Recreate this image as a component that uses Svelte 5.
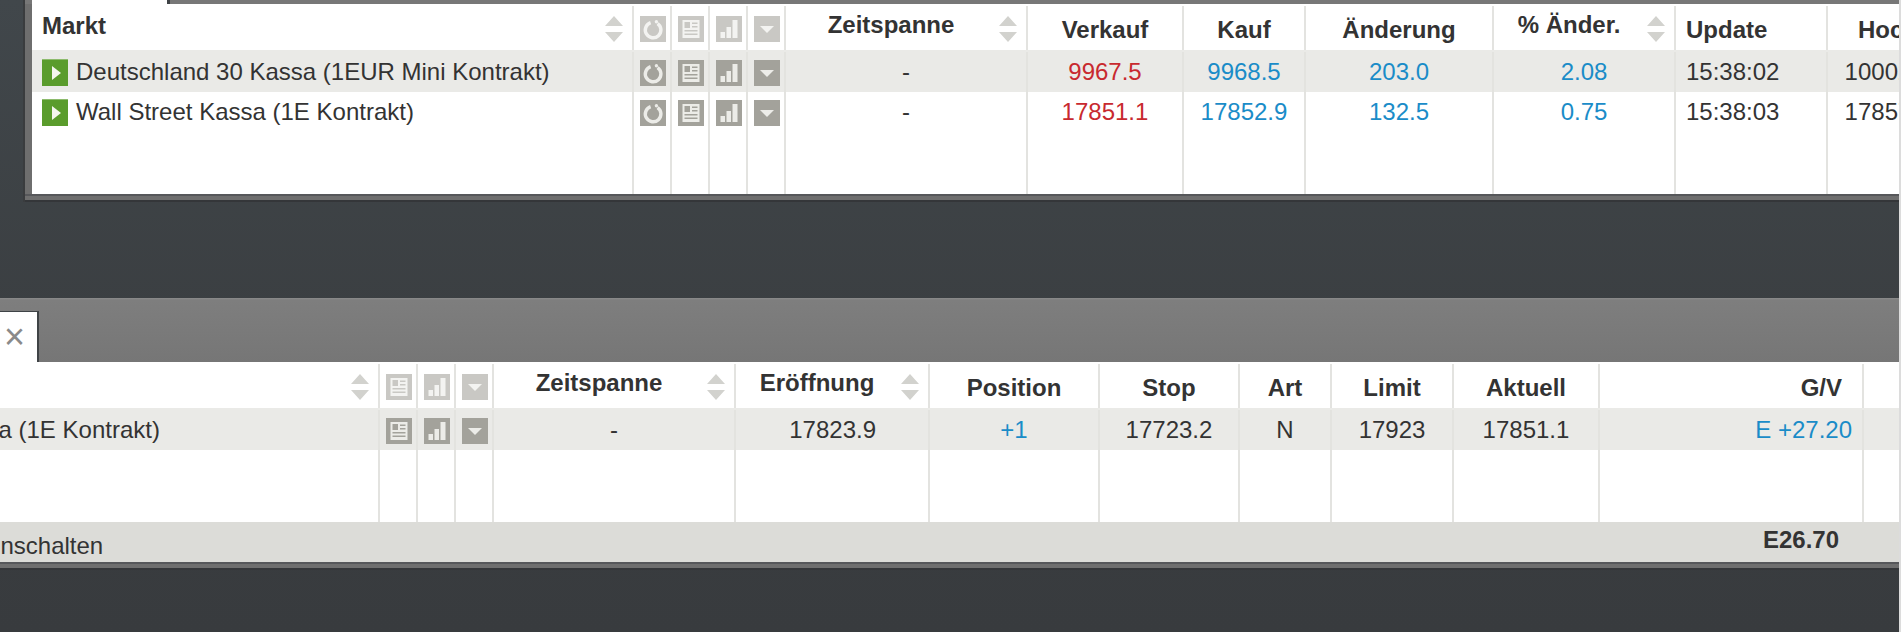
<script lang="ts">
  type Col = { label: string; width: number; align?: string; sort?: boolean };

  const marketCols: Col[] = [
    { label: "Zeitspanne", width: 242, sort: true },
    { label: "Verkauf", width: 156 },
    { label: "Kauf", width: 122 },
    { label: "Änderung", width: 188 },
    { label: "% Änder.", width: 182, sort: true },
    { label: "Update", width: 152, align: "left" },
    { label: "Hoch", width: 122 }
  ];

  const markets = [
    { name: "Deutschland 30 Kassa (1EUR Mini Kontrakt)", cells: ["-", "9967.5", "9968.5", "203.0", "2.08", "15:38:02", "10002.5"], kinds: ["", "sell", "up", "up", "up", "", ""] },
    { name: "Wall Street Kassa (1E Kontrakt)", cells: ["-", "17851.1", "17852.9", "132.5", "0.75", "15:38:03", "17857.3"], kinds: ["", "sell", "up", "up", "up", "", ""] }
  ];

  const posCols: Col[] = [
    { label: "Zeitspanne", width: 242, sort: true },
    { label: "Eröffnung", width: 194, sort: true },
    { label: "Position", width: 170 },
    { label: "Stop", width: 140 },
    { label: "Art", width: 92 },
    { label: "Limit", width: 122 },
    { label: "Aktuell", width: 146 }
  ];
</script>

{#snippet sortArrows()}
  <svg class="sort" width="20" height="26" viewBox="0 0 20 26">
    <path d="M10 0 L19 10 H1 Z M1 16 H19 L10 26 Z" fill="#d2d2ce" />
  </svg>
{/snippet}

{#snippet tools(refresh: boolean)}
  {#if refresh}
    <div class="tool">
      <svg class="ico" viewBox="0 0 26 26">
        <rect width="26" height="26" />
        <path class="line" d="M17.6 7.6 A7.8 7.8 0 1 1 10.6 6.6" stroke-width="3.4" />
        <circle class="mark" cx="16.4" cy="5.8" r="1.7" />
      </svg>
    </div>
  {/if}
  <div class="tool">
    <svg class="ico" viewBox="0 0 26 26">
      <rect width="26" height="26" />
      <path class="mark" fill-rule="evenodd" d="M4.5 4 H21.5 V22 H4.5 Z M6.5 6 V12 H12 V6 Z M14 6.5 V8 H19.5 V6.5 Z M14 10 V11.5 H19.5 V10 Z M6.5 14 V15.5 H19.5 V14 Z M6.5 17.5 V19 H19.5 V17.5 Z" />
    </svg>
  </div>
  <div class="tool">
    <svg class="ico" viewBox="0 0 26 26">
      <rect width="26" height="26" />
      <path class="mark" d="M4.5 16 H9 V22 H4.5 Z M10.5 11 H15 V22 H10.5 Z M16.5 4 H21.5 V22 H16.5 Z" />
    </svg>
  </div>
  <div class="tool">
    <svg class="ico" viewBox="0 0 26 26">
      <rect width="26" height="26" />
      <path class="mark" d="M6 10 H20 L13 17 Z" />
    </svg>
  </div>
{/snippet}

{#snippet headCells(cols: Col[])}
  {#each cols as c}
    <div class="hd" class:left={c.align === "left"} class:sorted={c.sort} style="width:{c.width}px">
      <span>{c.label}</span>
      {#if c.sort}{@render sortArrows()}{/if}
    </div>
  {/each}
{/snippet}

<div class="page">
  <div class="stage">
    <section class="panel top">
      <div class="strip"><div class="tab"></div></div>
      <div class="grid">
        <div class="row head">
          <div class="name hd-name">
            <strong class="market-title">Markt</strong>
            {@render sortArrows()}
          </div>
          <div class="tools faded">{@render tools(true)}</div>
          {@render headCells(marketCols)}
        </div>

        {#each markets as m, i}
          <div class="row body" class:hl={i === 0}>
            <div class="name">
              <svg class="play" viewBox="0 0 26 27">
                <rect width="26" height="27" fill="#5a9c2c" />
                <rect width="26" height="1" fill="#8dbb6c" />
                <path d="M10 7 L19 14 L10 21 Z" fill="#f4f6ee" />
              </svg>
              <span>{m.name}</span>
            </div>
            <div class="tools">{@render tools(true)}</div>
            {#each m.cells as v, j}
              <div class="cell {m.kinds[j]}" class:left={marketCols[j].align === "left"} style="width:{marketCols[j].width}px">{v}</div>
            {/each}
          </div>
        {/each}

        <div class="row fill">
          <div class="name"></div>
          <div class="tools">
            <div class="tool"></div><div class="tool"></div><div class="tool"></div><div class="tool"></div>
          </div>
          {#each marketCols as c}<div class="cell" style="width:{c.width}px"></div>{/each}
        </div>
      </div>
      <div class="foot-edge"></div>
    </section>

    <section class="panel bottom">
      <div class="tabs">
        <div class="tab2"><span class="close">×</span></div>
      </div>
      <div class="grid">
        <div class="row head">
          <div class="name hd-name">
            <span></span>
            {@render sortArrows()}
          </div>
          <div class="tools faded">{@render tools(false)}</div>
          {@render headCells(posCols)}
          <div class="hd gv"><span>G/V</span></div>
          <div class="hd end"></div>
        </div>

        <div class="row body hl">
          <div class="name"><span class="indent">Wall Street Kassa (1E Kontrakt)</span></div>
          <div class="tools">{@render tools(false)}</div>
          <div class="cell" style="width:242px">-</div>
          <div class="cell open" style="width:194px">17823.9</div>
          <div class="cell up" style="width:170px">+1</div>
          <div class="cell" style="width:140px">17723.2</div>
          <div class="cell" style="width:92px">N</div>
          <div class="cell" style="width:122px">17923</div>
          <div class="cell" style="width:146px">17851.1</div>
          <div class="cell gv up">E +27.20</div>
          <div class="cell end"></div>
        </div>

        <div class="row fill bottom-fill">
          <div class="name"></div>
          <div class="tools">
            <div class="tool"></div><div class="tool"></div><div class="tool"></div>
          </div>
          {#each posCols as c}<div class="cell" style="width:{c.width}px"></div>{/each}
          <div class="cell gv"></div>
          <div class="cell end"></div>
        </div>

        <div class="summary">
          <span class="stops">Garantierte Stops einschalten</span>
          <strong>E26.70</strong>
        </div>
      </div>
      <div class="foot-edge"></div>
    </section>
  </div>
  <div class="edge"></div>
</div>

<style>
  :global(body) {
    margin: 0;
    background: #3a3e41;
  }
  .page {
    width: 1902px;
    height: 632px;
    overflow: hidden;
    display: flex;
    font-family: "Liberation Sans", Arial, sans-serif;
    font-size: 24px;
    color: #333;
  }
  .stage {
    width: 1899px;
    height: 632px;
    flex: none;
    overflow: hidden;
    background: linear-gradient(#41474b, #3b3f42 50%, #383b3e);
  }
  .edge {
    flex: none;
    width: 3px;
    background: linear-gradient(90deg, #dcdcdc 2px, #fff 2px);
  }

  .panel {
    display: flex;
    flex-direction: column;
    overflow: hidden;
  }
  .top {
    height: 202px;
    width: 1879px;
    margin-left: 23px;
    background: #6e6e6e;
    border-left: 2px solid #3a3c3e;
    box-sizing: border-box;
  }
  .strip {
    height: 4px;
    flex: none;
    background: #777;
  }
  .tab {
    width: 135px;
    height: 4px;
    margin-left: 7px;
    background: #fff;
    border-right: 3px solid #3f4346;
  }
  .top .grid {
    margin-left: 7px;
    height: 190px;
  }
  .grid {
    background: #fff;
    overflow: hidden;
    width: 1867px;
    flex: none;
  }

  .row {
    display: flex;
    width: max-content;
  }
  .head {
    height: 48px;
    box-sizing: border-box;
    padding-top: 2px;
    border-bottom: 2px solid #eaeae7;
  }
  .body {
    height: 40px;
  }
  .hl {
    background: #eaeae7;
  }
  .fill {
    height: 62px;
  }
  .row > div {
    box-sizing: border-box;
  }

  .name {
    width: 602px;
    flex: none;
    display: flex;
    align-items: center;
    gap: 8px;
    padding-left: 10px;
    border-right: 2px solid #e3e3e0;
  }
  .hd-name {
    justify-content: space-between;
    padding-right: 8px;
  }
  .hd-name .sort {
    margin-top: 2px;
  }
  .hd-name .market-title,
  .hd span {
    font-weight: 700;
  }
  .hd-name .market-title {
    position: relative;
    top: -2px;
    margin-left: 0;
  }
  .play {
    width: 26px;
    height: 27px;
    flex: none;
    align-self: flex-start;
    margin-top: 7px;
  }
  .indent {
    margin-left: 34px;
    white-space: nowrap;
  }

  .tools {
    display: flex;
    flex: none;
  }
  .tool {
    width: 38px;
    box-sizing: border-box;
    padding-left: 6px;
    padding-top: 8px;
    border-right: 2px solid #e3e3e0;
  }
  .head .tool {
    padding-top: 10px;
  }
  .ico {
    display: block;
    width: 26px;
    height: 26px;
  }
  .ico rect {
    fill: #a3a29b;
  }
  .ico .mark {
    fill: #ecece8;
  }
  .ico .line {
    fill: none;
    stroke: #ecece8;
  }
  .faded .ico {
    opacity: 0.58;
  }

  .hd {
    flex: none;
    display: flex;
    align-items: center;
    justify-content: center;
    padding-top: 4px;
    border-right: 2px solid #e3e3e0;
    position: relative;
  }
  .hd.sorted {
    padding-right: 30px;
    padding-top: 0;
  }
  .hd.sorted span {
    position: relative;
    top: -3px;
  }
  .hd.left {
    justify-content: flex-start;
    padding-left: 10px;
  }
  .sort {
    flex: none;
    display: block;
  }
  .hd .sort {
    position: absolute;
    right: 8px;
    top: 10px;
  }

  .cell {
    flex: none;
    text-align: center;
    line-height: 40px;
    border-right: 2px solid #e3e3e0;
    white-space: nowrap;
  }
  .hl .cell,
  .hl .tool,
  .hl .name {
    border-right-color: #e3e3df;
  }
  .cell.left {
    text-align: left;
    padding-left: 10px;
  }
  .sell {
    color: #c8292f;
  }
  .up {
    color: #1a8cc8;
  }
  .cell.open {
    text-align: right;
    padding-right: 52px;
  }

  .gv {
    width: 264px;
    flex: none;
    text-align: right;
    padding-right: 10px;
  }
  .hd.gv {
    justify-content: flex-end;
    padding-right: 20px;
  }
  .end {
    width: 60px;
    flex: none;
    border-right: 0;
  }

  .foot-edge {
    flex: none;
    height: 8px;
    background: linear-gradient(#56575a 2px, #6e6e6e 2px, #6e6e6e 6px, #343639 6px);
  }

  .bottom {
    margin-top: 96px;
    height: 272px;
    margin-left: -222px;
    width: 2124px;
    background: #777;
  }
  .tabs {
    height: 64px;
    flex: none;
    box-sizing: border-box;
    padding-top: 13px;
    background: linear-gradient(#8c8c8c, #7e7e7e 2px, #767676);
  }
  .tab2 {
    width: 261px;
    height: 51px;
    box-sizing: border-box;
    background: #fff;
    border-top: 1px solid #3f4346;
    border-right: 2px solid #3f4346;
    display: flex;
    justify-content: flex-end;
    align-items: center;
  }
  .close {
    color: #8a8a8a;
    font-size: 36px;
    line-height: 36px;
    margin-right: 12px;
  }
  .bottom .grid {
    width: 2121px;
    height: 200px;
    display: flex;
    flex-direction: column;
  }
  .bottom-fill {
    height: 72px;
  }
  .summary {
    flex: none;
    height: 40px;
    background: #dcdcd8;
    display: flex;
    justify-content: space-between;
    position: relative;
    padding-left: 9px;
  }
  .summary .stops {
    position: relative;
    top: 9px;
    line-height: 30px;
  }
  .summary strong {
    margin-right: 60px;
    margin-top: 3px;
    line-height: 30px;
  }
</style>
